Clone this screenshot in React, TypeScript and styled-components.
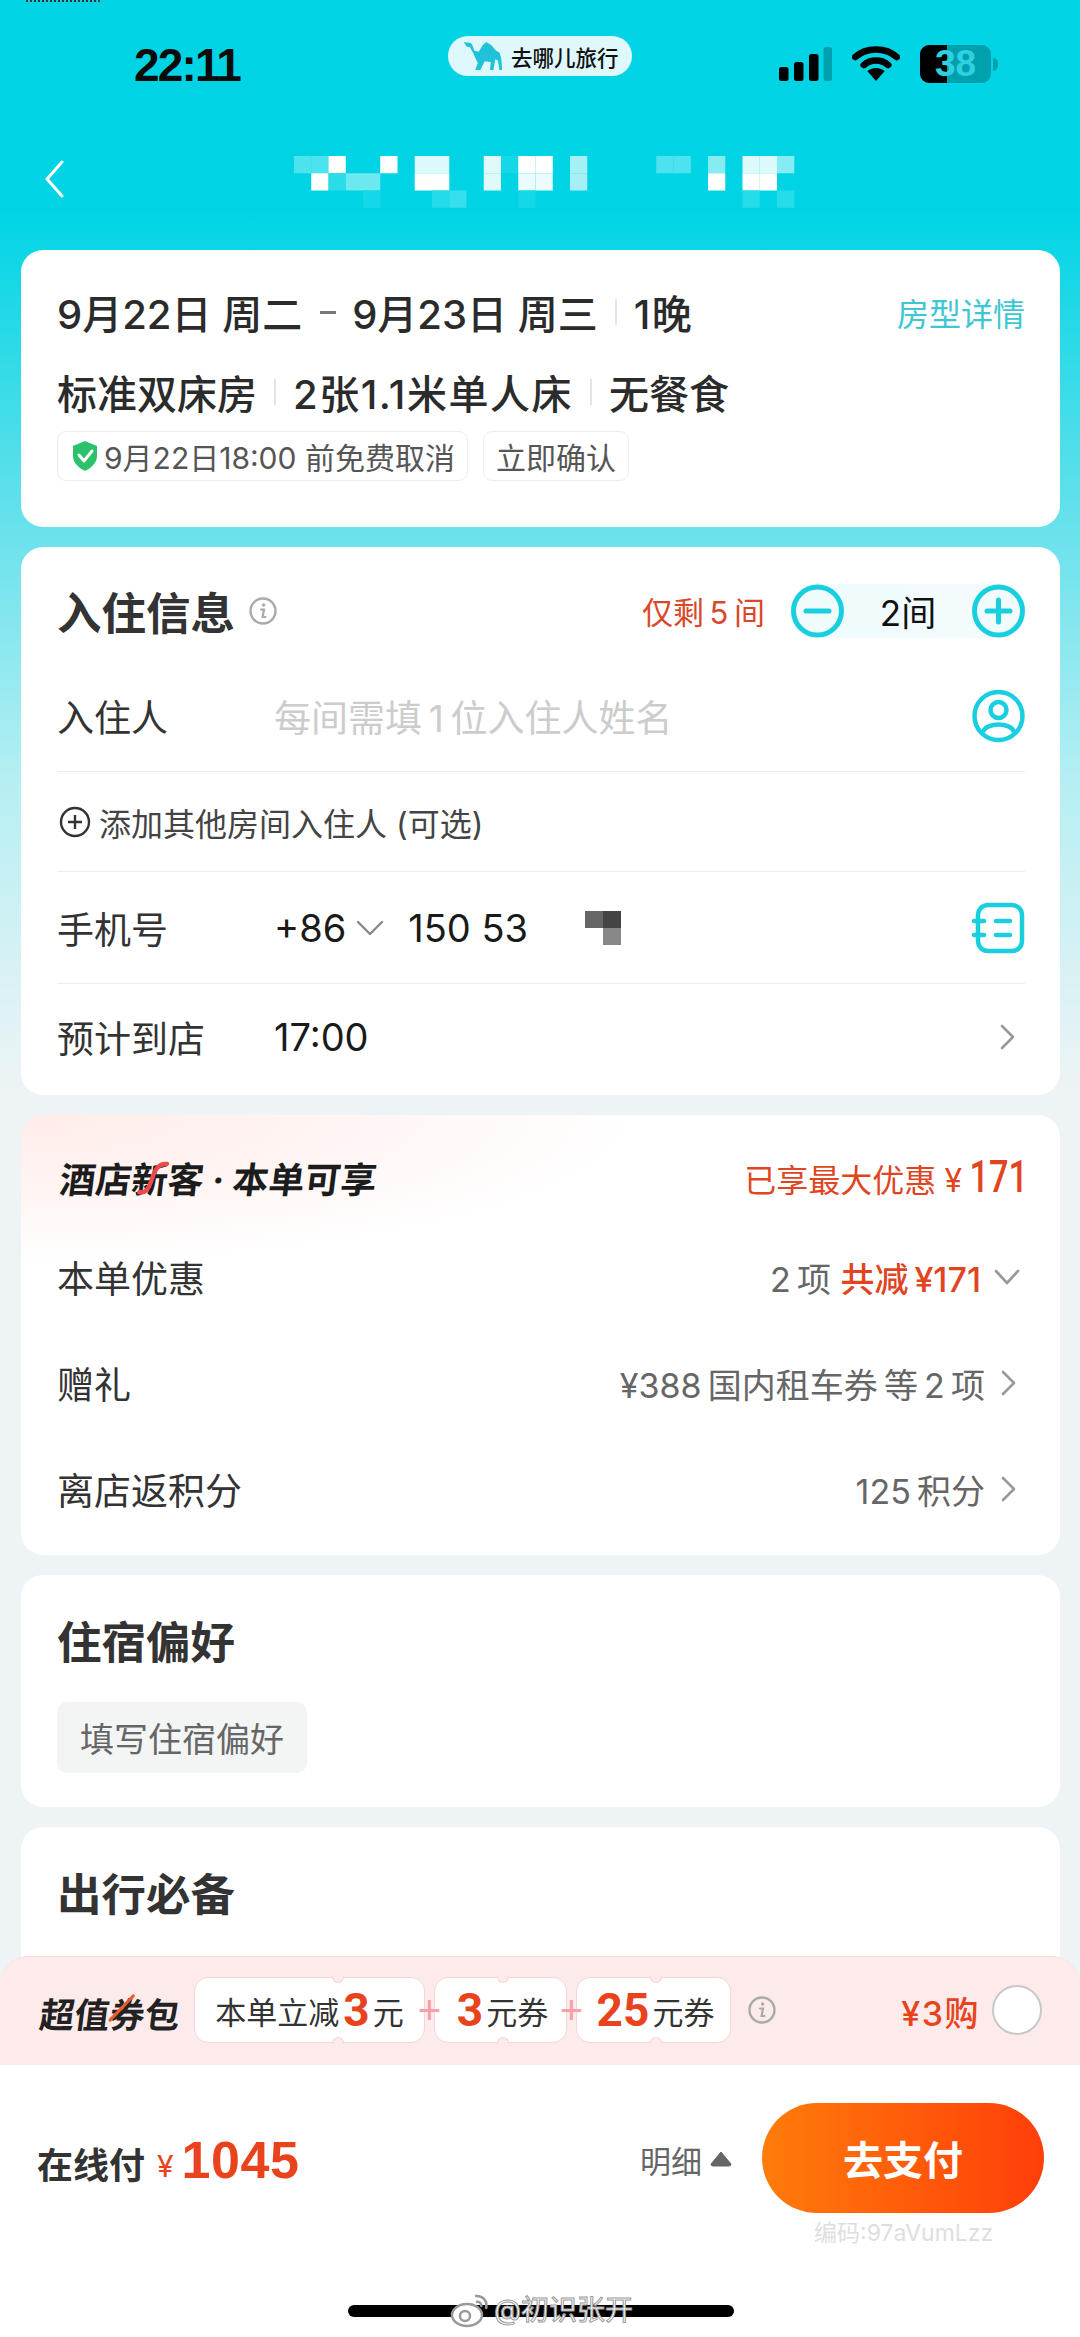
import React from "react";
import styled, { createGlobalStyle } from "styled-components";

const FONT = `Inter, "Noto Sans CJK SC", "Noto Sans", sans-serif`;

const Global = createGlobalStyle`
  html, body { margin: 0; padding: 0; background: #eef3f5; }
  * { box-sizing: border-box; }
`;

const Page = styled.div`
  position: relative;
  width: 1080px;
  height: 2337px;
  overflow: hidden;
  font-family: ${FONT};
  color: #333;
  background: linear-gradient(180deg, #00d4e4 0, #00d4e4 210px, #6ce2ec 540px, #b5eff3 780px, #eef3f5 1090px, #eef3f5 100%);
`;

const TopNoise = styled.div`
  position: absolute;
  left: 26px;
  top: 0;
  width: 74px;
  height: 2px;
  background: repeating-linear-gradient(90deg, #333 0 2px, transparent 2px 4px);
`;

const StatusBar = styled.div`
  height: 128px;
  padding: 36px 0 0 134px;
  display: flex;
  align-items: flex-start;
`;

const Clock = styled.div`
  width: 314px;
  margin-top: 5px;
  font-family: "Liberation Sans", sans-serif;
  font-size: 46px;
  line-height: 48px;
  font-weight: 700;
  letter-spacing: -1.8px;
  color: #0b0b0b;
`;

const AppPill = styled.div`
  width: 184px;
  height: 40px;
  border-radius: 20px;
  background: #def8fb;
  display: flex;
  align-items: center;
  padding-left: 15px;
  gap: 8px;
  font-size: 21.5px;
  font-weight: 500;
  color: #111;
  white-space: nowrap;
`;

const StatusIcons = styled.div`
  margin-left: 147px;
  margin-top: 9px;
  display: flex;
  align-items: center;
`;

const WifiIcon = styled.svg`
  margin-left: 20px;
`;

const Battery = styled.div`
  width: 71px;
  height: 38px;
  margin-left: 20px;
  border-radius: 9px;
  background: linear-gradient(90deg, #000 0 27px, #00a1ae 27px 100%);
  color: #2fd0e0;
  font-family: "Liberation Sans", sans-serif;
  font-weight: 700;
  font-size: 37px;
  line-height: 38px;
  text-align: center;
`;

const BatteryNub = styled.div`
  width: 5px;
  height: 13px;
  margin-left: 2px;
  border-radius: 0 5px 5px 0;
  background: #00a1ae;
`;

const NavBar = styled.div`
  height: 122px;
  padding: 32px 0 0 44px;
  display: flex;
  align-items: flex-start;
`;

const TitleMosaic = styled.svg`
  margin-left: 230px;
  margin-top: -4px;
`;

const Cards = styled.div`
  display: flex;
  flex-direction: column;
  gap: 20px;
  padding: 0 20px 0 21px;
`;

const Card = styled.section<{ $tinted?: boolean }>`
  background: ${(p) =>
    p.$tinted
      ? "radial-gradient(ellipse 620px 150px at 0 0, #ffecea 0, #fff4f2 45%, #ffffff 100%), #fff"
      : "#fff"};
  border-radius: 22px;
  padding: 0 35px 0 36px;
`;

const SummaryCard = styled(Card)`
  height: 277px;
  padding-top: 35px;
`;

const StayRow = styled.div`
  display: flex;
  align-items: center;
  justify-content: space-between;
  height: 54px;
`;

const StayText = styled.div`
  display: flex;
  align-items: center;
  font-size: 40px;
  font-weight: 500;
  color: #2b2b2b;
  white-space: nowrap;
`;

const WideSeg = styled.span`
  letter-spacing: 1.5px;
`;

const Sep = styled.span`
  width: 2px;
  height: 26px;
  background: #e4e4e4;
  margin: 0 17px;
`;

const DateDash = styled.span`
  width: 16px;
  height: 3px;
  margin: 0 16px 0 18px;
  background: #777;
`;

const DetailLink = styled.div`
  font-size: 32px;
  color: #3fc6d3;
  white-space: nowrap;
`;

const RoomRow = styled(StayRow)`
  margin-top: 26px;
  justify-content: flex-start;
`;

const Tags = styled.div`
  display: flex;
  gap: 15px;
  margin-top: 12px;
`;

const Tag = styled.div`
  height: 50px;
  padding: 0 12px;
  display: flex;
  align-items: center;
  gap: 4px;
  border: 1px solid #ececec;
  border-radius: 9px;
  font-size: 30px;
  color: #555;
  white-space: nowrap;
`;

const FormCard = styled(Card)`
  height: 548px;
`;

const SectionHead = styled.div`
  height: 113px;
  padding-top: 14px;
  display: flex;
  align-items: center;
`;

const SectionTitle = styled.h2`
  margin: 0;
  font-size: 44.5px;
  font-weight: 700;
  color: #333;
  white-space: nowrap;
`;

const InfoWrap = styled.span`
  display: inline-flex;
  margin-left: 14px;
`;

const Remain = styled.div`
  margin-left: auto;
  font-size: 31px;
  color: #d9482a;
  white-space: nowrap;
`;

const Stepper = styled.div`
  display: flex;
  align-items: center;
  margin-left: 26px;
  background: linear-gradient(90deg, #effbfd, #f4fcfd);
  border-radius: 26px;
  height: 54px;
`;

const RoomCount = styled.div`
  width: 128px;
  text-align: center;
  font-size: 35px;
  color: #111;
`;

const Field = styled.div<{ $h: number; $noLine?: boolean }>`
  height: ${(p) => p.$h}px;
  display: flex;
  align-items: center;
  border-bottom: ${(p) => (p.$noLine ? "none" : "1px solid #ececec")};
`;

const FieldLabel = styled.div`
  width: 217px;
  flex: none;
  font-size: 37px;
  color: #333;
  white-space: nowrap;
`;

const Placeholder = styled.div`
  font-size: 37px;
  color: #cccccc;
  white-space: nowrap;
`;

const FieldValue = styled.div`
  font-size: 38px;
  color: #1a1a1a;
  white-space: nowrap;
`;

const PhoneArrow = styled.svg`
  margin: 0 24px 0 10px;
`;

const PhoneMask = styled.svg`
  margin-left: 57px;
`;

const EndIcon = styled.div`
  margin-left: auto;
  display: flex;
`;

const ArrowEnd = styled(EndIcon)`
  margin-right: 6px;
`;

const AddOther = styled.div`
  display: flex;
  align-items: center;
  gap: 8px;
  padding-left: 2px;
  font-size: 32px;
  color: #444;
  white-space: nowrap;
`;

const OfferHead = styled.div`
  height: 109px;
  padding-top: 15px;
  display: flex;
  align-items: center;
  justify-content: space-between;
`;

const OfferTitle = styled.div`
  position: relative;
  font-size: 36px;
  font-weight: 700;
  color: #1c1c1c;
  white-space: nowrap;
  transform: skewX(-7deg);
  transform-origin: left bottom;
`;

const Squiggle = styled.svg`
  position: absolute;
  left: 78px;
  top: 10px;
`;

const OfferBest = styled.div`
  display: flex;
  align-items: baseline;
  gap: 8px;
  margin-right: -3px;
  font-size: 32px;
  color: #e0451f;
  white-space: nowrap;
`;

const BigNum = styled.span`
  display: inline-block;
  margin-left: -9px;
  font-family: Roboto, sans-serif;
  font-size: 44px;
  font-weight: 500;
  transform: scaleX(0.78);
  transform-origin: right;
`;

const OfferRow = styled.div`
  height: 106px;
  display: flex;
  align-items: center;
  justify-content: space-between;
`;

const OfferValue = styled.div`
  display: flex;
  align-items: center;
  gap: 13px;
  font-size: 34px;
  color: #666;
  white-space: nowrap;
  padding-right: 5px;
`;

const Red = styled.span`
  color: #e0451f;
  font-weight: 500;
`;

const OffersCard = styled(Card)`
  height: 440px;
`;

const PrefCard = styled(Card)`
  height: 232px;
  padding-top: 32px;
`;

const PrefButton = styled.div`
  width: 250px;
  height: 71px;
  margin-top: 30px;
  border-radius: 10px;
  background: #f3f5f5;
  display: flex;
  align-items: center;
  justify-content: center;
  font-size: 34px;
  color: #666;
`;

const EssentialCard = styled(Card)`
  height: 400px;
  padding-top: 32px;
`;

const BottomDock = styled.div`
  position: absolute;
  left: 0;
  right: 0;
  bottom: 0;
  height: 381px;
  display: flex;
  flex-direction: column;
`;

const CouponBar = styled.div`
  height: 109px;
  flex: none;
  background: #fdeaea;
  border-radius: 28px 28px 0 0;
  border-top: 1px solid #fbdedd;
  padding: 20px 38px 0 37px;
  display: flex;
  align-items: flex-start;
`;

const CouponTitle = styled.div`
  position: relative;
  width: 157px;
  padding-top: 10px;
  font-size: 35px;
  font-weight: 700;
  color: #222;
  white-space: nowrap;
  transform: skewX(-7deg);
  transform-origin: left bottom;
`;

const CouponSlash = styled.svg`
  position: absolute;
  left: 68px;
  top: 16px;
`;

const Ticket = styled.div<{ $w: number; $notch: number }>`
  position: relative;
  width: ${(p) => p.$w}px;
  height: 66px;
  background: #fff;
  border: 1.5px solid #f6d6d6;
  border-radius: 14px;
  display: flex;
  align-items: center;
  justify-content: center;
  font-size: 31px;
  color: #333;
  white-space: nowrap;
  &::before, &::after {
    content: "";
    position: absolute;
    left: ${(p) => p.$notch}%;
    width: 10px;
    height: 6px;
    background: #fdeaea;
    border: 1px solid #f6d6d6;
  }
  &::before { top: -2px; border-top: none; border-radius: 0 0 6px 6px; }
  &::after { bottom: -2px; border-bottom: none; border-radius: 6px 6px 0 0; }
`;

const TicketNum = styled.span`
  font-family: Roboto, sans-serif;
  font-size: 46px;
  font-weight: 700;
  color: #e8431c;
  line-height: 1;
  margin: 0 3px 0 4px;
`;

const Plus = styled.span`
  position: relative;
  z-index: 1;
  width: 9px;
  flex: none;
  display: flex;
  justify-content: center;
  margin-top: 16px;
  font-family: "Liberation Sans", sans-serif;
  font-size: 40px;
  line-height: 34px;
  color: #f5a0a6;
`;

const CouponInfo = styled.span`
  display: flex;
  margin: 19px 0 0 17px;
`;

const CouponPrice = styled.div`
  margin: 10px 12px 0 auto;
  font-size: 34px;
  font-weight: 500;
  letter-spacing: 1.5px;
  color: #e8431c;
  white-space: nowrap;
`;

const Radio = styled.div`
  width: 50px;
  height: 50px;
  margin-top: 8px;
  border-radius: 50%;
  background: #fff;
  border: 2px solid #c8c8c8;
`;

const PayBar = styled.div`
  position: relative;
  flex: 1;
  background: #fff;
  padding: 38px 36px 0 37px;
  display: flex;
  align-items: flex-start;
`;

const PayLabel = styled.div`
  margin-top: 34px;
  font-size: 36px;
  font-weight: 700;
  color: #333;
  white-space: nowrap;
`;

const Yen = styled.span`
  margin: 43px 0 0 12px;
  font-size: 30px;
  line-height: 40px;
  color: #e8431c;
`;

const Price = styled.span`
  margin: 23px 0 0 8px;
  font-family: "Liberation Sans", sans-serif;
  font-size: 52px;
  line-height: 68px;
  font-weight: 700;
  letter-spacing: 0.6px;
  color: #e8431c;
`;

const DetailToggle = styled.div`
  margin: 26px 30px 0 auto;
  display: flex;
  align-items: center;
  gap: 8px;
  height: 60px;
  font-size: 31px;
  color: #666;
`;

const PayButton = styled.div`
  width: 282px;
  height: 110px;
  border-radius: 55px;
  background: linear-gradient(90deg, #ff7c0a, #ff3e0a);
  color: #fff;
  font-size: 40px;
  font-weight: 700;
  display: flex;
  align-items: center;
  justify-content: center;
`;

const CodeMark = styled.div`
  position: absolute;
  left: 814px;
  top: 149px;
  font-size: 23px;
  color: #dedede;
  white-space: nowrap;
`;

const HomeBar = styled.div`
  position: absolute;
  left: 348px;
  top: 240px;
  width: 386px;
  height: 12px;
  border-radius: 6px;
  background: #000;
`;

const WeiboMark = styled.div`
  position: absolute;
  left: 450px;
  top: 223px;
  display: flex;
  align-items: center;
  gap: 4px;
  font-size: 28px;
  line-height: 44px;
  color: #fff;
  -webkit-text-stroke: 1px #9a9a9a;
  white-space: nowrap;
`;

const Chevron = ({ dir = "right" }: { dir?: "right" | "down" }) =>
  dir === "right" ? (
    <svg width="22" height="28" viewBox="0 0 22 28">
      <path d="M5 3 L16 14 L5 25" fill="none" stroke="#999" strokeWidth="2.6" strokeLinecap="round" strokeLinejoin="round" />
    </svg>
  ) : (
    <svg width="26" height="22" viewBox="0 0 26 22">
      <path d="M2 5 L13 17 L24 5" fill="none" stroke="#999" strokeWidth="2.6" strokeLinecap="round" strokeLinejoin="round" />
    </svg>
  );

const Info = ({ size = 28, color = "#aaa" }: { size?: number; color?: string }) => (
  <svg width={size} height={size} viewBox="0 0 28 28">
    <circle cx="14" cy="14" r="12.5" fill="none" stroke={color} strokeWidth="2.4" />
    <circle cx="14.6" cy="8" r="1.7" fill={color} />
    <path d="M12 12.5 H15 L13.6 20 H16.4" fill="none" stroke={color} strokeWidth="2.2" strokeLinecap="round" />
  </svg>
);

const RoundBtn = ({ plus }: { plus?: boolean }) => (
  <svg width="53" height="54" viewBox="0 0 53 54">
    <circle cx="26.5" cy="27" r="24" fill="#f0fbfc" stroke="#19cfdf" strokeWidth="5" />
    <path d={plus ? "M15 27 H38 M26.5 16 V38" : "M15 27 H38"} stroke="#19cfdf" strokeWidth="5" strokeLinecap="round" />
  </svg>
);

const Camel = () => (
  <svg width="40" height="30" viewBox="0 0 46 34">
    <path
      d="M1 1 L9 2 L11 5 L13 11 L18 12 L23 4 L27 1 L33 5 L38 11 L42 13 L44 20 L45 33 L42 33 L40 22 L37 21 L35 33 L31 33 L32 24 L25 23 L20 33 L14 33 L17 25 L15 21 L12 14 L8 7 L4 6 Z"
      fill="#1fc2d8"
    />
  </svg>
);

const mosaic: [number, number, string][] = [
  [0, 0, "#4de3ee"], [1, 0, "#4de3ee"], [2, 0, "#fff"], [5, 0, "#fff"],
  [7, 0, "#dcf9fb"], [8, 0, "#dcf9fb"], [11, 0, "#e0fafb"], [12, 0, "#14d8e7"], [13, 0, "#fff"], [14, 0, "#fff"],
  [16, 0, "#a4f0f5"], [21, 0, "#4de3ee"], [22, 0, "#4de3ee"], [24, 0, "#86ecf2"],
  [26, 0, "#dcf9fb"], [27, 0, "#dcf9fb"], [28, 0, "#86ecf2"],
  [1, 1, "#fff"], [2, 1, "#2adbe8"], [3, 1, "#6ce8f0"], [4, 1, "#6ce8f0"], [7, 1, "#fff"], [8, 1, "#fff"],
  [11, 1, "#e0fafb"], [13, 1, "#eafcfd"], [14, 1, "#eafcfd"], [16, 1, "#a4f0f5"],
  [24, 1, "#fff"], [26, 1, "#fff"], [27, 1, "#fff"],
  [4, 2, "#14d8e7"], [8, 2, "#22dbe9"], [9, 2, "#36dfec"], [13, 2, "#14d8e7"],
  [26, 2, "#26dcea"], [28, 2, "#26dcea"],
];

export default function App() {
  return (
    <Page>
      <Global />
      <TopNoise />
      <StatusBar>
        <Clock>22:11</Clock>
        <AppPill>
          <Camel />
          去哪儿旅行
        </AppPill>
        <StatusIcons>
          <svg width="53" height="36" viewBox="0 0 53 36">
            <rect x="0" y="21" width="9.5" height="14" rx="2.5" fill="#000" />
            <rect x="15" y="16" width="9.5" height="19" rx="2.5" fill="#000" />
            <rect x="30" y="8" width="9.5" height="27" rx="2.5" fill="#000" />
            <rect x="44.5" y="1" width="8.5" height="34" rx="2.5" fill="#00a1ae" />
          </svg>
          <WifiIcon width="48" height="36" viewBox="0 0 44 36" preserveAspectRatio="none">
            <path d="M3 11 C13 1 31 1 41 11" fill="none" stroke="#000" strokeWidth="6.5" strokeLinecap="round" />
            <path d="M11 19 C17 13 27 13 33 19" fill="none" stroke="#000" strokeWidth="6.5" strokeLinecap="round" />
            <path d="M14 25 C19 21 25 21 30 25 L22 35 Z" fill="#000" />
          </WifiIcon>
          <Battery>38</Battery>
          <BatteryNub />
        </StatusIcons>
      </StatusBar>

      <NavBar>
        <svg width="20" height="38" viewBox="0 0 20 38">
          <path d="M18 2 L3 19 L18 36" fill="none" stroke="#fff" strokeWidth="3" strokeLinecap="round" strokeLinejoin="round" />
        </svg>
        <TitleMosaic width="510" height="52" viewBox="0 0 510 52">
          {mosaic.map(([c, r, f], i) => (
            <rect key={i} x={c * 17.25} y={r * 17.25} width="17.25" height="17.25" fill={f} />
          ))}
        </TitleMosaic>
      </NavBar>

      <Cards>
        <SummaryCard>
          <StayRow>
            <StayText>
              9月22日 周二
              <DateDash />
              9月23日 周三
              <Sep />
              <WideSeg>1晚</WideSeg>
            </StayText>
            <DetailLink>房型详情</DetailLink>
          </StayRow>
          <RoomRow>
            <StayText>
              标准双床房
              <Sep />
              <WideSeg>2张1.1米单人床</WideSeg>
              <Sep />
              无餐食
            </StayText>
          </RoomRow>
          <Tags>
            <Tag>
              <svg width="30" height="32" viewBox="0 0 30 32">
                <path d="M15 1 L27 6 V16 C27 23 21 28 15 31 C9 28 3 23 3 16 V6 Z" fill="#2cc26b" />
                <path d="M9 15 L14 21 L22 11" fill="none" stroke="#fff" strokeWidth="3" strokeLinecap="round" strokeLinejoin="round" />
              </svg>
              9月22日18:00 前免费取消
            </Tag>
            <Tag>立即确认</Tag>
          </Tags>
        </SummaryCard>

        <FormCard>
          <SectionHead>
            <SectionTitle>入住信息</SectionTitle>
            <InfoWrap>
              <Info />
            </InfoWrap>
            <Remain>仅剩&thinsp;5&thinsp;间</Remain>
            <Stepper>
              <RoundBtn />
              <RoomCount>2间</RoomCount>
              <RoundBtn plus />
            </Stepper>
          </SectionHead>
          <Field $h={112}>
            <FieldLabel>入住人</FieldLabel>
            <Placeholder>每间需填&thinsp;1&thinsp;位入住人姓名</Placeholder>
            <EndIcon>
              <svg width="53" height="54" viewBox="0 0 53 54">
                <circle cx="26.5" cy="27" r="24" fill="none" stroke="#19cfdf" strokeWidth="4.5" />
                <circle cx="26.5" cy="21" r="8" fill="none" stroke="#19cfdf" strokeWidth="4.5" />
                <path d="M11 43 C14 33 39 33 42 43" fill="none" stroke="#19cfdf" strokeWidth="4.5" />
              </svg>
            </EndIcon>
          </Field>
          <Field $h={100}>
            <AddOther>
              <svg width="32" height="32" viewBox="0 0 32 32">
                <circle cx="16" cy="16" r="14" fill="none" stroke="#333" strokeWidth="2.4" />
                <path d="M9 16 H23 M16 9 V23" stroke="#333" strokeWidth="2.4" />
              </svg>
              添加其他房间入住人 (可选)
            </AddOther>
          </Field>
          <Field $h={112}>
            <FieldLabel>手机号</FieldLabel>
            <FieldValue>+86</FieldValue>
            <PhoneArrow width="28" height="20" viewBox="0 0 28 20">
              <path d="M2 4 L14 16 L26 4" fill="none" stroke="#888" strokeWidth="2.4" strokeLinecap="round" strokeLinejoin="round" />
            </PhoneArrow>
            <FieldValue>150 53</FieldValue>
            <PhoneMask width="36" height="34" viewBox="0 0 36 34">
              <rect x="0" y="0" width="18" height="17" fill="#666" />
              <rect x="18" y="0" width="18" height="17" fill="#444" />
              <rect x="18" y="17" width="18" height="17" fill="#888" />
            </PhoneMask>
            <EndIcon>
              <svg width="53" height="52" viewBox="0 0 53 52">
                <rect x="6" y="3" width="44" height="46" rx="10" fill="none" stroke="#19cfdf" strokeWidth="4.5" />
                <path d="M2 19 H12 M2 33 H12 M24 19 H38 M24 33 H38" stroke="#19cfdf" strokeWidth="4.5" strokeLinecap="round" />
              </svg>
            </EndIcon>
          </Field>
          <Field $h={106} $noLine>
            <FieldLabel>预计到店</FieldLabel>
            <FieldValue>17:00</FieldValue>
            <ArrowEnd>
              <Chevron />
            </ArrowEnd>
          </Field>
        </FormCard>

        <OffersCard $tinted>
          <OfferHead>
            <OfferTitle>
              酒店新客 · 本单可享
              <Squiggle width="30" height="34" viewBox="0 0 30 34">
                <path d="M3 31 C9 33 12 28 14 18 C16 8 19 2 27 3" fill="none" stroke="#ee4a4a" strokeWidth="4.5" strokeLinecap="round" />
              </Squiggle>
            </OfferTitle>
            <OfferBest>
              已享最大优惠 <span>¥<BigNum>171</BigNum></span>
            </OfferBest>
          </OfferHead>
          <OfferRow>
            <FieldLabel>本单优惠</FieldLabel>
            <OfferValue>
              <span>2&thinsp;项&nbsp;<Red>共减&thinsp;¥171</Red></span>
              <Chevron dir="down" />
            </OfferValue>
          </OfferRow>
          <OfferRow>
            <FieldLabel>赠礼</FieldLabel>
            <OfferValue>
              ¥388&thinsp;国内租车券&thinsp;等&thinsp;2&thinsp;项
              <Chevron />
            </OfferValue>
          </OfferRow>
          <OfferRow>
            <FieldLabel>离店返积分</FieldLabel>
            <OfferValue>
              125&thinsp;积分
              <Chevron />
            </OfferValue>
          </OfferRow>
        </OffersCard>

        <PrefCard>
          <SectionTitle>住宿偏好</SectionTitle>
          <PrefButton>填写住宿偏好</PrefButton>
        </PrefCard>

        <EssentialCard>
          <SectionTitle>出行必备</SectionTitle>
        </EssentialCard>
      </Cards>

      <BottomDock>
        <CouponBar>
          <CouponTitle>
            超值券包
            <CouponSlash width="26" height="30" viewBox="0 0 26 30">
              <path d="M3 27 L23 3" stroke="#ee5a2a" strokeWidth="3.5" strokeLinecap="round" />
            </CouponSlash>
          </CouponTitle>
          <Ticket $w={231} $notch={60}>
            本单立减<TicketNum>3</TicketNum>元
          </Ticket>
          <Plus>+</Plus>
          <Ticket $w={133} $notch={47}>
            <TicketNum>3</TicketNum>元券
          </Ticket>
          <Plus>+</Plus>
          <Ticket $w={155} $notch={48}>
            <TicketNum>25</TicketNum>元券
          </Ticket>
          <CouponInfo>
            <Info />
          </CouponInfo>
          <CouponPrice>¥3购</CouponPrice>
          <Radio />
        </CouponBar>
        <PayBar>
          <PayLabel>在线付</PayLabel>
          <Yen>¥</Yen>
          <Price>1045</Price>
          <DetailToggle>
            明细
            <svg width="22" height="18" viewBox="0 0 22 18">
              <path d="M11 2 L21 14 Q21 16 19 16 H3 Q1 16 1 14 Z" fill="#666" stroke="#666" strokeLinejoin="round" />
            </svg>
          </DetailToggle>
          <PayButton>去支付</PayButton>
          <CodeMark>编码:97aVumLzz</CodeMark>
          <HomeBar />
          <WeiboMark>
            <svg width="40" height="38" viewBox="0 0 40 38">
              <ellipse cx="17" cy="24" rx="15" ry="11" fill="#fff" stroke="#9a9a9a" strokeWidth="2.5" />
              <circle cx="15" cy="25" r="5" fill="none" stroke="#9a9a9a" strokeWidth="2.5" />
              <path d="M25 5 C33 4 38 10 36 18 M26 11 C30 10 32 13 31 16" fill="none" stroke="#9a9a9a" strokeWidth="2.5" />
            </svg>
            @初识张开
          </WeiboMark>
        </PayBar>
      </BottomDock>
    </Page>
  );
}
